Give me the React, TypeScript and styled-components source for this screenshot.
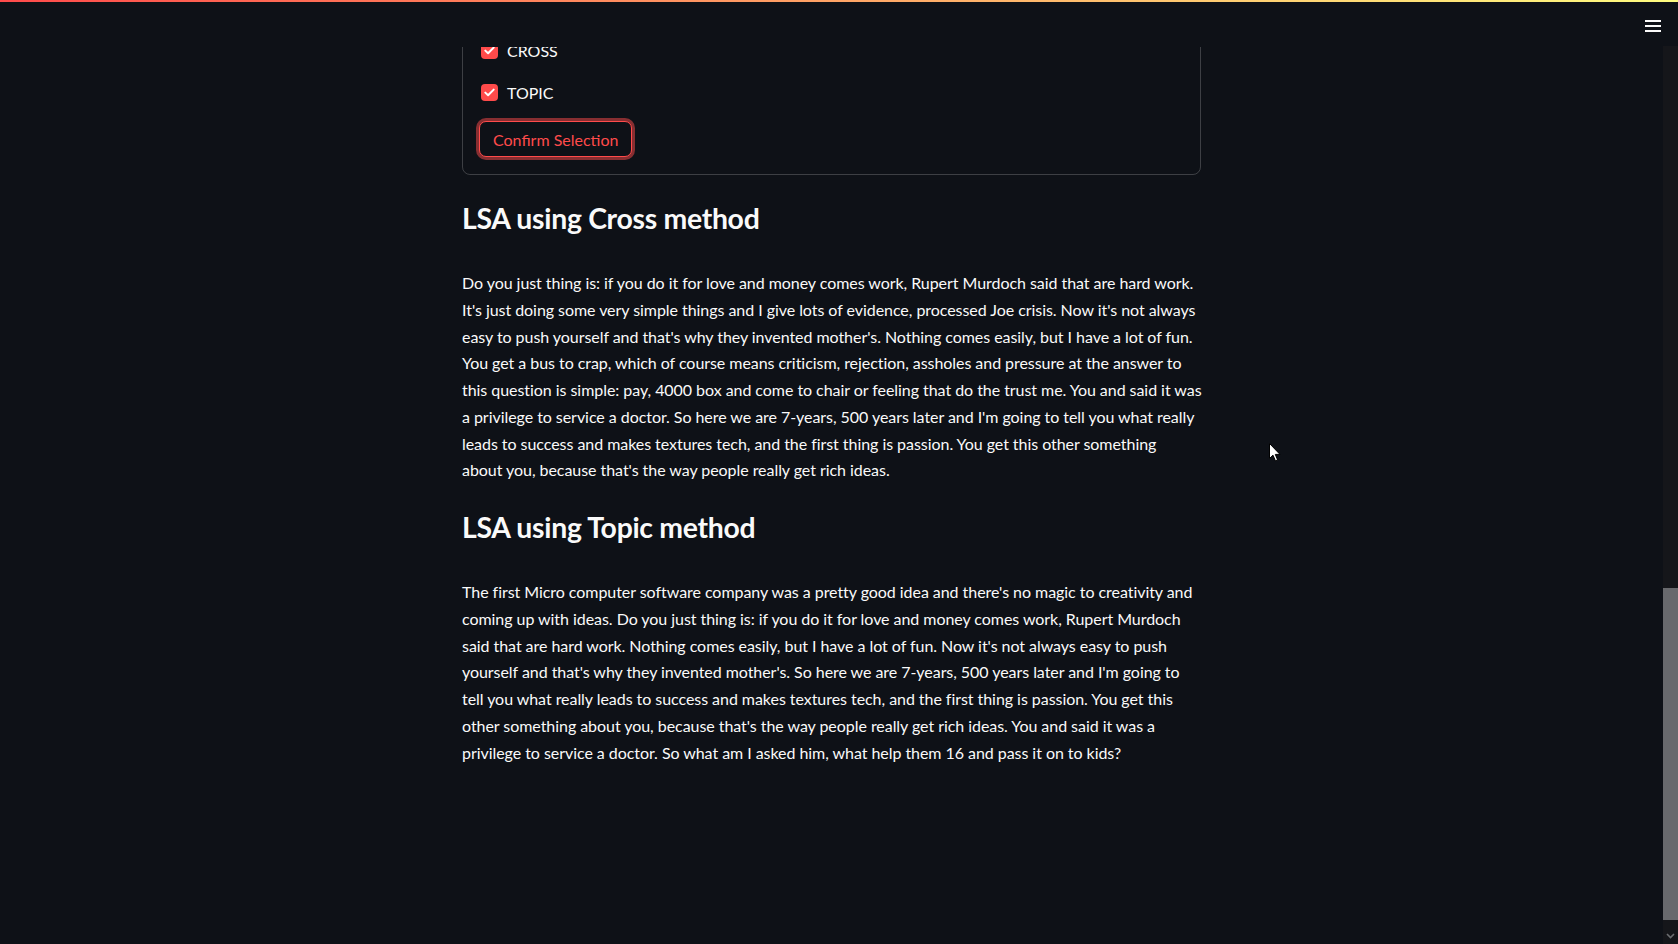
import React from "react";
import styled, { createGlobalStyle } from "styled-components";

const GlobalStyle = createGlobalStyle`
  html, body {
    margin: 0;
    padding: 0;
    background: #0e1117;
    overflow: hidden;
  }
  body {
    font-family: Lato, "Noto Sans", sans-serif;
    color: #fafafa;
    -webkit-font-smoothing: antialiased;
  }
`;

const Page = styled.div`
  position: relative;
  height: 944px;
  padding-right: 15px;
  box-sizing: border-box;
  overflow: hidden;
`;

const Header = styled.header`
  position: relative;
  height: 47px;
  display: flex;
  align-items: center;
  justify-content: flex-end;
  padding-right: 2px;
  background: #0e1117;

  &::before {
    content: "";
    position: absolute;
    top: 0;
    left: 0;
    right: -15px;
    height: 2px;
    background: linear-gradient(90deg, #ff4b4b, #fffd80);
  }
`;

const MenuButton = styled.button`
  width: 16px;
  height: 32px;
  display: flex;
  align-items: center;
  justify-content: center;
  background: none;
  border: none;
  padding: 0;
  margin-top: 4px;
  color: #fafafa;
`;

const Main = styled.main`
  width: 739px;
  margin: 0 auto;
`;

// the form is scrolled partly under the header
const Clip = styled.div`
  overflow: hidden;
`;

const Form = styled.div`
  margin-top: -19px;
  border: 1px solid rgba(250, 250, 250, 0.2);
  border-radius: 8px;
  padding: 0 16px 17px 16px;
`;

const CheckRow = styled.label`
  height: 42px;
  display: flex;
  align-items: center;
  gap: 9px;
  padding-left: 2px;
  font-size: 16px;
  color: #fafafa;
`;

const Box = styled.span`
  width: 17px;
  height: 17px;
  border-radius: 4px;
  background: #ff4b4b;
  display: flex;
  align-items: center;
  justify-content: center;
`;

const ConfirmButton = styled.button`
  margin-top: 8px;
  height: 36px;
  padding: 0 13px;
  border: 1px solid #ff4b4b;
  border-radius: 7px;
  background: #0e1117;
  color: #ff4b4b;
  font-family: Lato, "Noto Sans", sans-serif;
  font-size: 16px;
  box-shadow: 0 0 0 3px rgba(255, 75, 75, 0.5);
`;

const Heading = styled.h3<{ $top: number }>`
  margin: ${({ $top }) => $top}px 0 0;
  font-size: 28.4px;
  line-height: 36px;
  font-weight: 700;
  letter-spacing: -0.3px;
  color: #fafafa;
`;

const Paragraph = styled.p<{ $top: number }>`
  margin: ${({ $top }) => $top}px 0 0;
  font-size: 16px;
  line-height: 26.75px;
  letter-spacing: -0.05px;
  color: #fafafa;
`;

const Line = styled.span`
  display: block;
  white-space: nowrap;
`;

const Scrollbar = styled.div`
  position: absolute;
  top: 46px;
  right: 0;
  bottom: 0;
  width: 15px;
  background: #15161a;
`;

const Thumb = styled.div`
  position: absolute;
  top: 542px;
  left: 0;
  width: 15px;
  height: 332px;
  background: #68696d;
`;

const ArrowDown = styled.div`
  position: absolute;
  bottom: 2px;
  left: 0;
  width: 15px;
  height: 12px;
  display: flex;
  align-items: center;
  justify-content: center;
`;

const Cursor = styled.svg`
  position: absolute;
  left: 1269px;
  top: 443px;
`;

const cross = [
  "Do you just thing is: if you do it for love and money comes work, Rupert Murdoch said that are hard work.",
  "It's just doing some very simple things and I give lots of evidence, processed Joe crisis. Now it's not always",
  "easy to push yourself and that's why they invented mother's. Nothing comes easily, but I have a lot of fun.",
  "You get a bus to crap, which of course means criticism, rejection, assholes and pressure at the answer to",
  "this question is simple: pay, 4000 box and come to chair or feeling that do the trust me. You and said it was",
  "a privilege to service a doctor. So here we are 7-years, 500 years later and I'm going to tell you what really",
  "leads to success and makes textures tech, and the first thing is passion. You get this other something",
  "about you, because that's the way people really get rich ideas.",
];

const topic = [
  "The first Micro computer software company was a pretty good idea and there's no magic to creativity and",
  "coming up with ideas. Do you just thing is: if you do it for love and money comes work, Rupert Murdoch",
  "said that are hard work. Nothing comes easily, but I have a lot of fun. Now it's not always easy to push",
  "yourself and that's why they invented mother's. So here we are 7-years, 500 years later and I'm going to",
  "tell you what really leads to success and makes textures tech, and the first thing is passion. You get this",
  "other something about you, because that's the way people really get rich ideas. You and said it was a",
  "privilege to service a doctor. So what am I asked him, what help them 16 and pass it on to kids?",
];

const Check = () => (
  <Box>
    <svg width="11" height="9" viewBox="0 0 11 9">
      <path d="M1.3 4.6 L4.1 7.3 L9.7 1.6" fill="none" stroke="#fff" strokeWidth="2" strokeLinecap="round" strokeLinejoin="round" />
    </svg>
  </Box>
);

const App: React.FC = () => (
  <Page>
    <GlobalStyle />
    <Header>
      <MenuButton aria-label="menu">
        <svg width="16" height="12" viewBox="0 0 16 12">
          <rect x="0" y="0" width="16" height="2" fill="#fafafa" />
          <rect x="0" y="5" width="16" height="2" fill="#fafafa" />
          <rect x="0" y="10" width="16" height="2" fill="#fafafa" />
        </svg>
      </MenuButton>
    </Header>

    <Main>
      <Clip>
        <Form>
          <CheckRow>
            <Check />
            CROSS
          </CheckRow>
          <CheckRow>
            <Check />
            TOPIC
          </CheckRow>
          <ConfirmButton>Confirm Selection</ConfirmButton>
        </Form>
      </Clip>

      <Heading $top={25}>LSA using Cross method</Heading>
      <Paragraph $top={34}>
        {cross.map((l, i) => (
          <Line key={i}>{l}</Line>
        ))}
      </Paragraph>

      <Heading $top={25}>LSA using Topic method</Heading>
      <Paragraph $top={34}>
        {topic.map((l, i) => (
          <Line key={i}>{l}</Line>
        ))}
      </Paragraph>
    </Main>

    <Scrollbar>
      <Thumb />
      <ArrowDown>
        <svg width="9" height="6" viewBox="0 0 9 6">
          <path d="M1 1 L4.5 4.5 L8 1" fill="none" stroke="#6b6d70" strokeWidth="1.6" />
        </svg>
      </ArrowDown>
    </Scrollbar>

    <Cursor width="12" height="19" viewBox="0 0 12 19">
      <path d="M0.5 0.5 L0.5 15.5 L4 12.2 L6.4 17.8 L8.6 16.9 L6.3 11.4 L11 11.4 Z" fill="#fff" stroke="#000" strokeWidth="1" />
    </Cursor>
  </Page>
);

export default App;
